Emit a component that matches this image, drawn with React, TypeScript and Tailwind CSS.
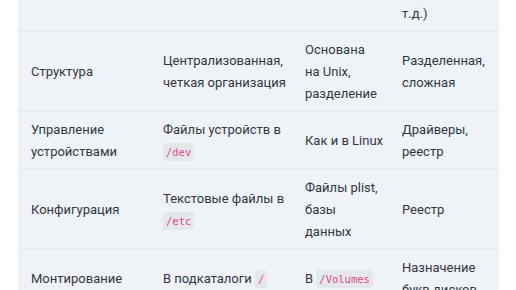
import React from "react";

type Cell = React.ReactNode;

function Code({ children }: { children: React.ReactNode }) {
  return (
    <code className="rounded-[3px] bg-[#e4e8ec] px-[3px] py-[3px] font-['DejaVu_Sans_Mono',monospace] text-[10.5px] text-[#e0488b]">
      {children}
    </code>
  );
}

const rows: Cell[][] = [
  [
    "Структура",
    "Централизованная, четкая организация",
    <>Основана на&nbsp;Unix, разделение</>,
    "Разделенная, сложная",
  ],
  [
    "Управление устройствами",
    <>
      Файлы устройств в <Code>/dev</Code>
    </>,
    "Как и в Linux",
    "Драйверы, реестр",
  ],
  [
    "Конфигурация",
    <>
      Текстовые файлы в <Code>/etc</Code>
    </>,
    "Файлы plist, базы данных",
    "Реестр",
  ],
  [
    "Монтирование",
    <>
      В подкаталоги <Code>/</Code>
    </>,
    <>
      В <Code>/Volumes</Code>
    </>,
    "Назначение букв дисков",
  ],
];

export default function App() {
  return (
    <div className="h-[290px] w-[516px] overflow-hidden bg-white font-['Roboto',sans-serif] text-[13px] leading-[22px] text-[#31373d]">
      <div className="ml-[18px] w-[481px] bg-[#eff3f8]">
        <table className="w-full table-fixed border-collapse">
          <colgroup>
            <col className="w-[132px]" />
            <col className="w-[142px]" />
            <col className="w-[97px]" />
            <col className="w-[110px]" />
          </colgroup>
          <tbody>
            <tr className="border-b border-[#e3e9f0]">
              <td className="pl-[13px] pr-1 pt-[3px] pb-[6px]" />
              <td className="pl-[13px] pr-1 pt-[3px] pb-[6px]" />
              <td className="pl-[13px] pr-1 pt-[3px] pb-[6px]" />
              <td className="pl-[13px] pr-1 pt-[3px] pb-[6px]">т.д.)</td>
            </tr>
            {rows.map((r, i) => (
              <tr key={i} className="border-b border-[#e3e9f0]">
                {r.map((c, j) => (
                  <td key={j} className="pl-[13px] pr-1 pt-[7px] pb-[6px] align-middle">
                    {c}
                  </td>
                ))}
              </tr>
            ))}
          </tbody>
        </table>
      </div>
    </div>
  );
}
